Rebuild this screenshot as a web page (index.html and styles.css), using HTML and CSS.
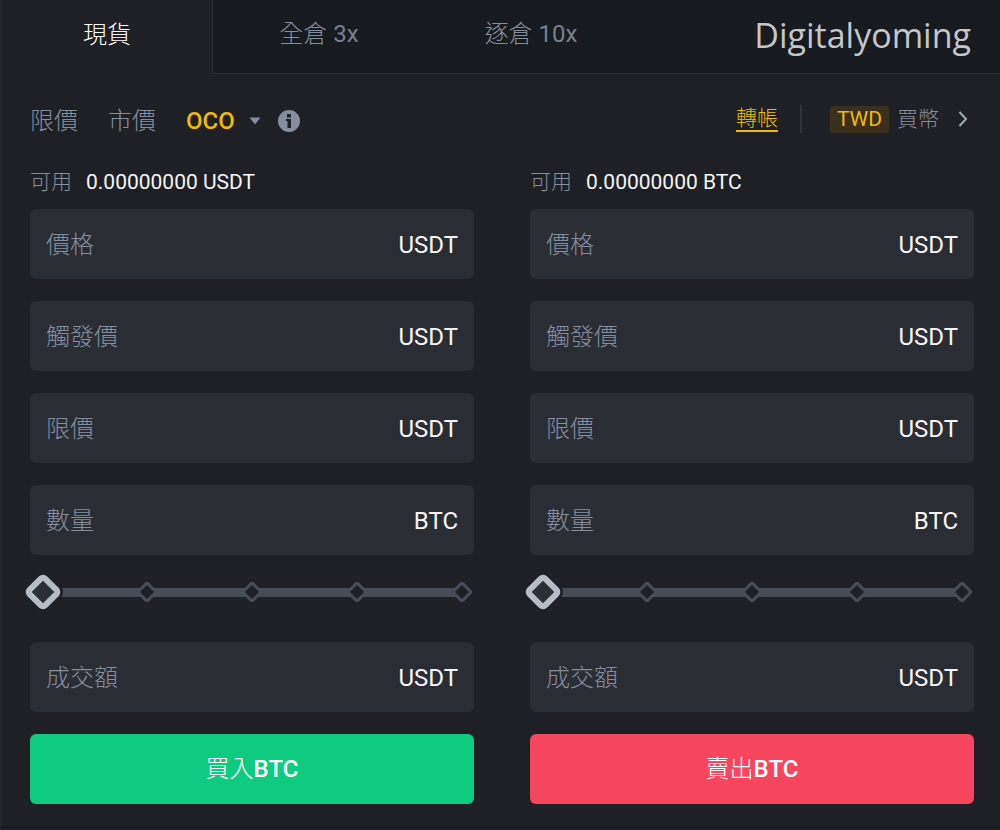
FILE: index.html
```
<!DOCTYPE html>
<html lang="zh-Hant">
<head>
<meta charset="utf-8">
<title>Digitalyoming</title>
<link rel="stylesheet" href="styles.css">
</head>
<body>
<main class="panel">
  <header class="tabs">
    <button class="tab tab-active" type="button">現貨</button>
    <button class="tab" type="button">全倉 <span class="leverage">3x</span></button>
    <button class="tab" type="button">逐倉 <span class="leverage">10x</span></button>
    <span class="brand">Digitalyoming</span>
  </header>

  <div class="toolbar">
    <nav class="order-types">
      <button class="type" type="button">限價</button>
      <button class="type" type="button">市價</button>
      <button class="type type-active" type="button">OCO
        <svg class="caret" viewBox="0 0 12 8" aria-hidden="true"><path d="M0.5 0.5h11L6 7.5z" fill="#848e9c"/></svg>
      </button>
      <button class="info" type="button" aria-label="OCO">
        <svg viewBox="0 0 22 22" aria-hidden="true"><circle cx="11" cy="11" r="11" fill="#848e9c"/><path d="M9 4h4v3.500H9zM8 9h5v9H9.500v-7H8z" fill="#1e2026"/></svg>
      </button>
    </nav>
    <div class="links">
      <a class="transfer" href="#">轉帳</a>
      <span class="divider"></span>
      <a class="buy-coin" href="#"><span class="badge">TWD</span><span class="buy-text">買幣</span>
        <svg class="chevron" viewBox="0 0 10 16" aria-hidden="true"><path d="M1.500 1l6.500 7-6.500 7" fill="none" stroke="#a0a8b3" stroke-width="2"/></svg>
      </a>
    </div>
  </div>

  <div class="forms">
    <form class="order">
      <p class="available"><span class="available-label">可用</span>0.00000000 USDT</p>
      <label class="field"><input class="field-input" type="text" placeholder="價格" aria-label="價格"><span class="unit">USDT</span></label>
      <label class="field"><input class="field-input" type="text" placeholder="觸發價" aria-label="觸發價"><span class="unit">USDT</span></label>
      <label class="field"><input class="field-input" type="text" placeholder="限價" aria-label="限價"><span class="unit">USDT</span></label>
      <label class="field"><input class="field-input" type="text" placeholder="數量" aria-label="數量"><span class="unit">BTC</span></label>
      <div class="slider">
        <div class="marks"><span class="origin"></span><span class="mark"></span><span class="mark"></span><span class="mark"></span><span class="mark"></span></div>
        <input class="range" type="range" min="0" max="100" value="0" aria-label="數量">
      </div>
      <label class="field"><input class="field-input" type="text" placeholder="成交額" aria-label="成交額"><span class="unit">USDT</span></label>
      <button class="submit submit-buy" type="button">買入<b class="coin">BTC</b></button>
    </form>

    <form class="order">
      <p class="available"><span class="available-label">可用</span>0.00000000 BTC</p>
      <label class="field"><input class="field-input" type="text" placeholder="價格" aria-label="價格"><span class="unit">USDT</span></label>
      <label class="field"><input class="field-input" type="text" placeholder="觸發價" aria-label="觸發價"><span class="unit">USDT</span></label>
      <label class="field"><input class="field-input" type="text" placeholder="限價" aria-label="限價"><span class="unit">USDT</span></label>
      <label class="field"><input class="field-input" type="text" placeholder="數量" aria-label="數量"><span class="unit">BTC</span></label>
      <div class="slider">
        <div class="marks"><span class="origin"></span><span class="mark"></span><span class="mark"></span><span class="mark"></span><span class="mark"></span></div>
        <input class="range" type="range" min="0" max="100" value="0" aria-label="數量">
      </div>
      <label class="field"><input class="field-input" type="text" placeholder="成交額" aria-label="成交額"><span class="unit">USDT</span></label>
      <button class="submit submit-sell" type="button">賣出<b class="coin">BTC</b></button>
    </form>
  </div>
</main>
</body>
</html>
```

FILE: styles.css
```
* { box-sizing: border-box; }
body {
  margin: 0;
  background: #1e2026;
  color: #f5f5f5;
  font-family: Roboto, "Noto Sans CJK TC", sans-serif;
  font-size: 24px;
  line-height: 32px;
}
button, input { font: inherit; color: inherit; margin: 0; padding: 0; border: 0; background: none; }
a { text-decoration: none; }

.panel {
  border-left: 2px solid #24272d;
  border-bottom: 2px solid #17191d;
  padding-bottom: 22px;
}

.tabs {
  display: grid;
  grid-template-columns: 211px 212px 212px 1fr;
  height: 74px;
  background: #171a1e;
}
.tab {
  padding-bottom: 5px;
  border-bottom: 1px solid #2b2f36;
  color: #848e9c;
  font-weight: 300;
}
.tab-active {
  background: #1e2026;
  border-bottom: 0;
  border-right: 1px solid #2b2f36;
  color: #ffffff;
}
.leverage { color: #76808f; font-weight: 400; }
.brand {
  padding: 11px 29px 0 0;
  border-bottom: 1px solid #2b2f36;
  color: #c4c6c9;
  font-family: "Open Sans", sans-serif;
  font-size: 34px;
  line-height: 48px;
  text-align: right;
}

.toolbar {
  display: flex;
  justify-content: space-between;
  align-items: center;
  height: 94px;
  padding: 0 32px 0 28px;
}
.order-types { display: flex; align-items: center; gap: 30px; color: #848e9c; }
.type { font-weight: 300; }
.type-active {
  display: flex;
  align-items: center;
  gap: 14px;
  color: #f0b90b;
  font-weight: 500;
}
.caret { width: 12px; height: 8px; }
.info { display: flex; margin-left: -13px; }
.info svg { width: 22px; height: 22px; }
.links { display: flex; align-items: center; font-size: 21px; padding-bottom: 4px; font-weight: 300; }
.transfer { color: #f0b90b; border-bottom: 2px solid #f0b90b; line-height: 24px; }
.divider { width: 2px; height: 28px; margin: 0 28px 0 22px; background: #2f343b; }
.buy-coin { display: flex; align-items: center; color: #848e9c; }
.badge {
  margin-right: 8px;
  padding: 0 7px;
  border-radius: 3px;
  background: #3a301d;
  color: #f0b90b;
  font-weight: 400;
  line-height: 27px;
}
.chevron { width: 10px; height: 16px; margin-left: 19px; }

.forms {
  display: grid;
  grid-template-columns: 1fr 1fr;
  gap: 56px;
  padding: 0 26px 0 28px;
}
.order { display: flex; flex-direction: column; gap: 22px; }
.available { margin: 0 0 -9px; font-size: 21px; line-height: 28px; }
.available-label { margin-right: 14px; color: #848e9c; font-weight: 300; }
.field {
  display: flex;
  align-items: center;
  height: 70px;
  padding: 2px 16px 0;
  border-radius: 6px;
  background: #2b2d35;
}
.field-input { flex: 1; min-width: 0; outline: 0; }
.field-input::placeholder { color: #848e9c; font-weight: 300; opacity: 1; }

.slider { position: relative; height: 44px; margin: -7px 0 6px; }
.marks {
  display: flex;
  justify-content: space-between;
  align-items: center;
  height: 44px;
  padding: 0 4px;
  background: linear-gradient(#474d57, #474d57) 12px center / calc(100% - 24px) 9px no-repeat;
}
.mark {
  width: 16px;
  height: 16px;
  border: 3px solid #474d57;
  border-radius: 3px;
  background: #1e2026;
  transform: rotate(45deg);
}
.origin {
  width: 16px;
  height: 16px;
  border-radius: 8px;
  background: #5a606b;
  box-shadow: 12px 0 0 -2px #5a606b, 12px 0 0 1px #1e2026;
}
.range {
  position: absolute;
  top: 0;
  left: -1px;
  width: calc(100% + 2px);
  height: 44px;
  appearance: none;
}
.range::-webkit-slider-thumb {
  appearance: none;
  width: 28px;
  height: 28px;
  border: 6px solid #b7bdc6;
  border-radius: 6px;
  background: #2b2f36;
  transform: rotate(45deg);
}

.submit { height: 70px; border-radius: 6px; color: #ffffff; font-weight: 300; }
.submit-buy { background: #0ecb81; }
.submit-sell { background: #f6465d; }
.coin { font-weight: 500; }
```
